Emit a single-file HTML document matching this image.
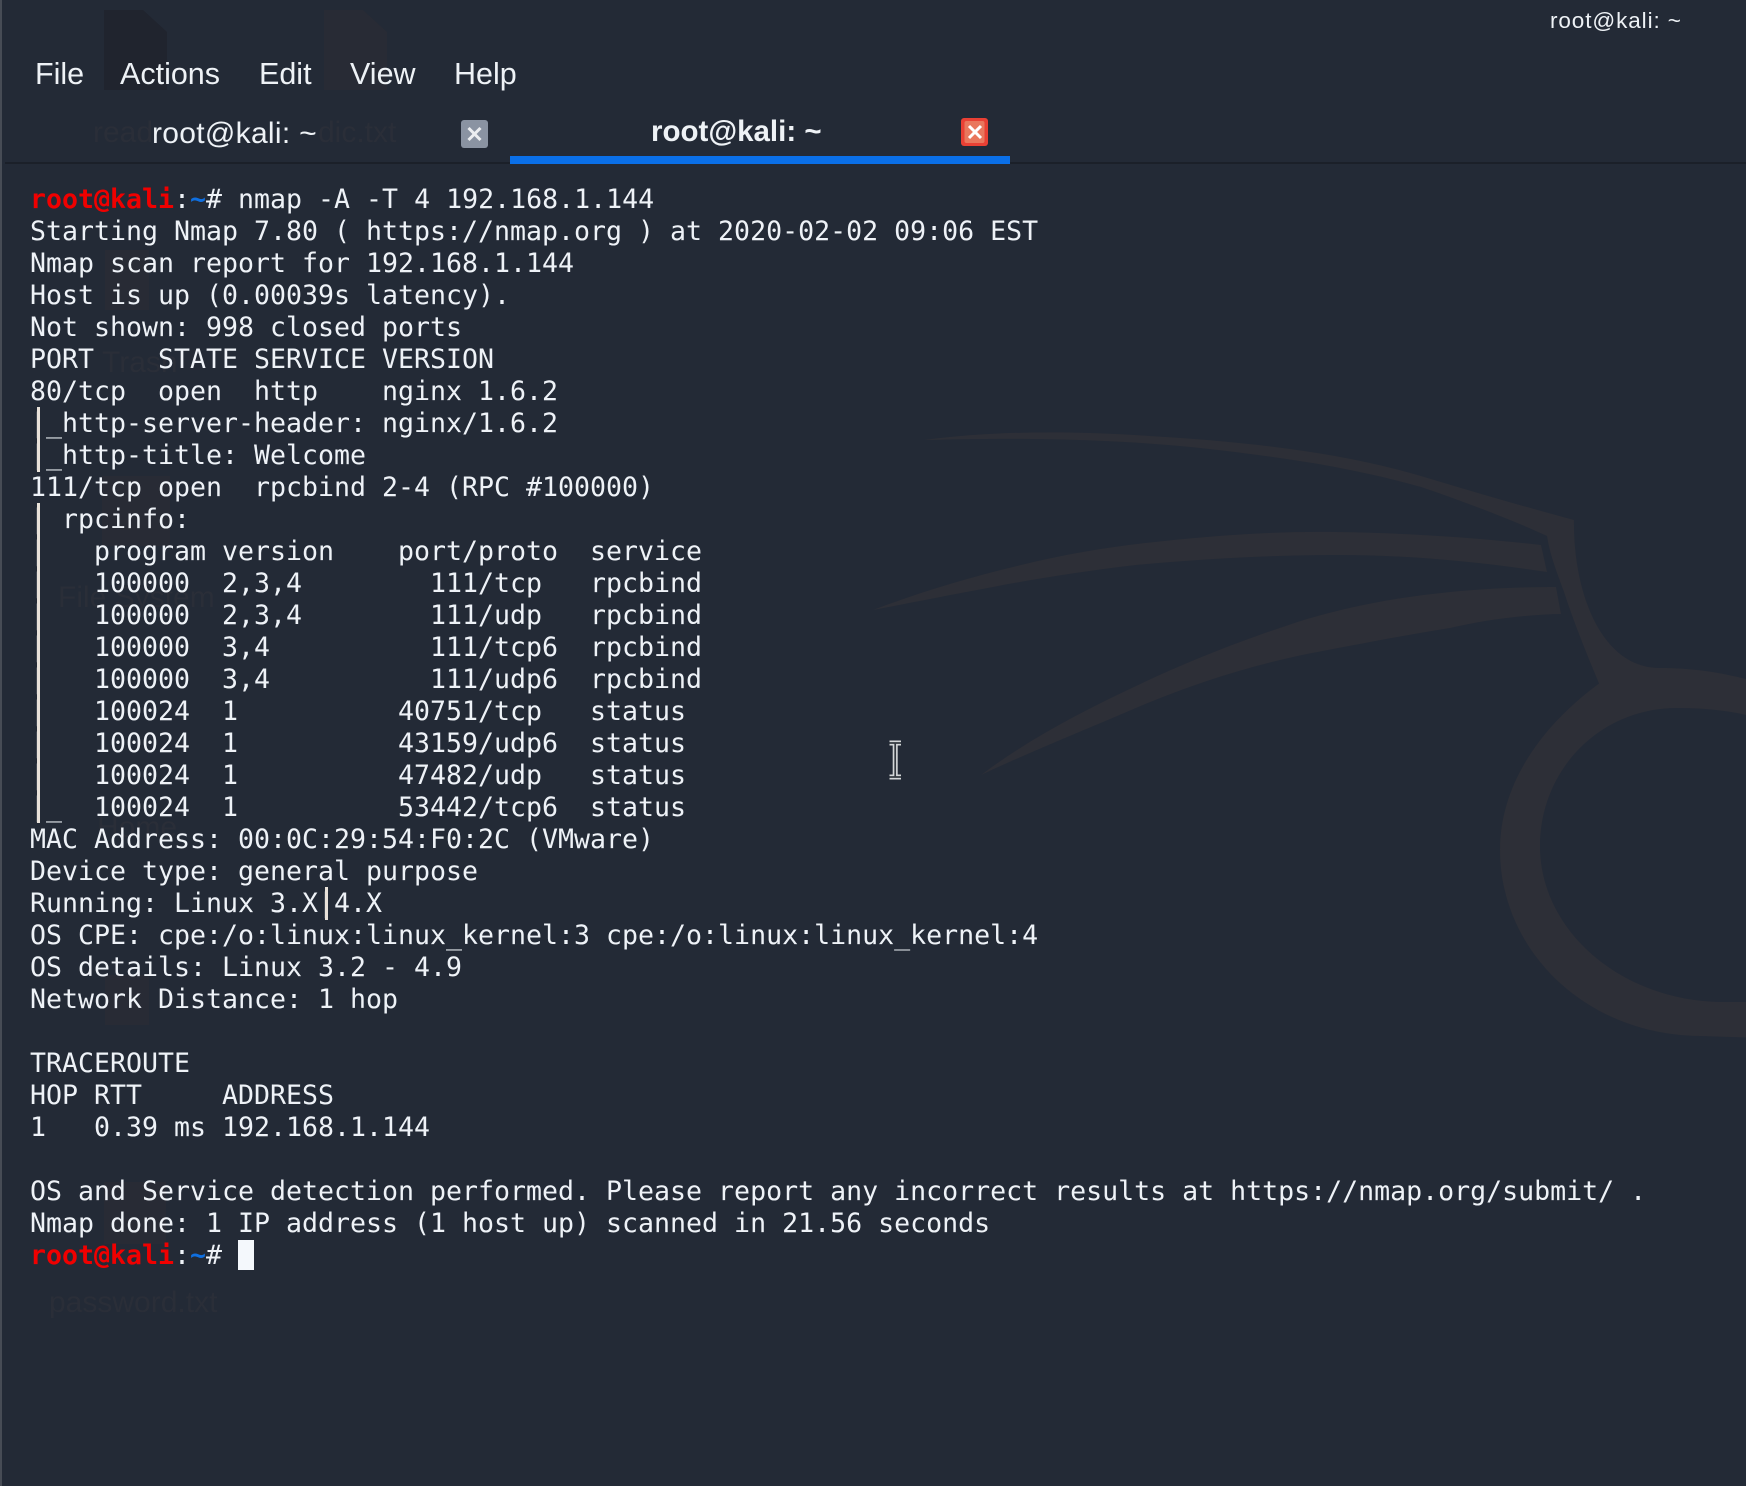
<!DOCTYPE html>
<html><head><meta charset="utf-8"><style>
html,body{margin:0;padding:0;width:1746px;height:1486px;overflow:hidden;background:#232a36}
#r{position:relative;width:1746px;height:1486px;overflow:hidden;background:#232a36;font-family:"Liberation Sans",sans-serif;color:#eef2f6}
.a{position:absolute;white-space:pre}
.g{color:#2a2e38;font-size:30px;line-height:36px}
.m{font-size:30.5px;line-height:40px;top:54px}
pre{position:absolute;left:30px;top:184px;margin:0;font:26.58px/32px "DejaVu Sans Mono","Liberation Mono",monospace;color:#eef2f7}
pre b{color:#f00000}pre i{font-style:normal;color:#0f6fe0;font-weight:bold}
</style></head><body><div id="r">
<svg class="a" style="left:0;top:0" width="1746" height="1486" viewBox="0 0 1746 1486">
<g fill="#2d2f37">
<path d="M924 440C1000 430 1079 431 1150 436C1250 442 1340 452 1421 476C1480 494 1530 508 1574 520C1573 590 1600 668 1660 668C1695 668 1722 673 1746 679V715C1725 710 1700 708 1679 708C1600 707 1540 770 1540 846C1540 930 1620 1000 1720 1002L1746 1002V1037.5L1700 1036C1585 1035 1500 950 1500 850C1500 785 1540 727 1599 683.5C1585 650 1573 620 1564 592C1556 570 1550 555 1547 536C1510 519 1465 502 1421 487C1360 470 1305 461 1250 454C1190 446 1140 442 1079 440C1020 438 970 439 924 440Z"/>
<path d="M873 610C920 592 970 577 1021 565C1070 553 1115 546 1164 541C1220 535 1280 531 1336 532C1410 533 1480 538 1541 545L1547 572C1480 562 1410 555 1336 555C1270 555 1200 559 1136 565C1085 571 1040 578 993 587C950 595 910 603 873 610Z"/>
<path d="M981 775C1030 738 1085 710 1136 686C1190 660 1250 637 1307 619C1355 605 1400 597 1450 592C1490 588 1525 587 1556 587L1561 614C1520 615 1485 620 1450 628C1400 636 1350 646 1307 654C1245 667 1190 685 1136 708C1080 732 1030 752 981 775Z"/>
</g>
<path fill="#20242e" d="M104 10H143L167 32V90H104Z"/>
<g fill="#282b35">
<path d="M324 10H363L387 32V90H324Z"/>
<rect x="102" y="476" width="68" height="70"/>
<rect x="104" y="1182" width="62" height="62"/>
<rect x="105" y="250" width="44" height="60"/>
<rect x="105" y="975" width="44" height="50"/>
</g>
<rect x="0" y="0" width="2" height="1486" fill="#474c55"/>
<rect x="5" y="162" width="1741" height="2" fill="#1b2029"/>
<rect x="510" y="156" width="500" height="8" fill="#0a6fe8"/>
<rect x="461" y="120" width="27" height="28" rx="3" fill="#8a93a2"/>
<rect x="961" y="118" width="27" height="28" rx="3" fill="#e94034"/>
<rect x="964.500" y="121" width="20" height="22" rx="2" fill="#e9775d"/>
<path d="M468.500 128L480.500 140M480.500 128L468.500 140" stroke="#eceef1" stroke-width="3"/>
<path d="M969 126L981 138M981 126L969 138" stroke="#fff" stroke-width="3"/>
<path d="M889.500 743H901M889.500 777H901M895.200 743V777" stroke="#d3d6d8" stroke-width="5" fill="none"/>
<path d="M889.500 743H901M889.500 777H901M895.200 743V777" stroke="#33383f" stroke-width="1.700" fill="none"/>
<rect x="238" y="1240" width="16" height="30" fill="#f4f8fc"/>
</svg>
<div class="a g" style="left:93px;top:115px">read</div>
<div class="a g" style="left:318px;top:115px">dic.txt</div>
<div class="a g" style="left:102px;top:345px">Trash</div>
<div class="a g" style="left:58px;top:580px">File System</div>
<div class="a g" style="left:97px;top:810px">Home</div>
<div class="a g" style="left:49px;top:1285px">password.txt</div>
<div class="a" style="left:1550px;top:8px;font-size:22.500px;line-height:26px;letter-spacing:.9px">root@kali: ~</div>
<div class="a m" style="left:35px">File</div>
<div class="a m" style="left:120px">Actions</div>
<div class="a m" style="left:259px">Edit</div>
<div class="a m" style="left:350px">View</div>
<div class="a m" style="left:454px">Help</div>
<div class="a" style="left:152px;top:115px;font-size:30px;line-height:38px;letter-spacing:.3px">root@kali: ~</div>
<div class="a" style="left:651px;top:113px;font-size:29.500px;line-height:38px;font-weight:bold">root@kali: ~</div>
<pre><b>root@kali</b>:<i>~</i># nmap -A -T 4 192.168.1.144
Starting Nmap 7.80 ( https://nmap.org ) at 2020-02-02 09:06 EST
Nmap scan report for 192.168.1.144
Host is up (0.00039s latency).
Not shown: 998 closed ports
PORT    STATE SERVICE VERSION
80/tcp  open  http    nginx 1.6.2
|_http-server-header: nginx/1.6.2
|_http-title: Welcome
111/tcp open  rpcbind 2-4 (RPC #100000)
| rpcinfo:
|   program version    port/proto  service
|   100000  2,3,4        111/tcp   rpcbind
|   100000  2,3,4        111/udp   rpcbind
|   100000  3,4          111/tcp6  rpcbind
|   100000  3,4          111/udp6  rpcbind
|   100024  1          40751/tcp   status
|   100024  1          43159/udp6  status
|   100024  1          47482/udp   status
|_  100024  1          53442/tcp6  status
MAC Address: 00:0C:29:54:F0:2C (VMware)
Device type: general purpose
Running: Linux 3.X|4.X
OS CPE: cpe:/o:linux:linux_kernel:3 cpe:/o:linux:linux_kernel:4
OS details: Linux 3.2 - 4.9
Network Distance: 1 hop

TRACEROUTE
HOP RTT     ADDRESS
1   0.39 ms 192.168.1.144

OS and Service detection performed. Please report any incorrect results at https://nmap.org/submit/ .
Nmap done: 1 IP address (1 host up) scanned in 21.56 seconds
<b>root@kali</b>:<i>~</i># </pre>
<svg class="a" style="left:0;top:0" width="1746" height="1486">
<rect x="37" y="407" width="3" height="65" fill="#e9e2da"/>
<rect x="37" y="503" width="3" height="320" fill="#e9e2da"/>
<rect x="325" y="887" width="3" height="33" fill="#e9e2da"/>
</svg>
</div></body></html>
